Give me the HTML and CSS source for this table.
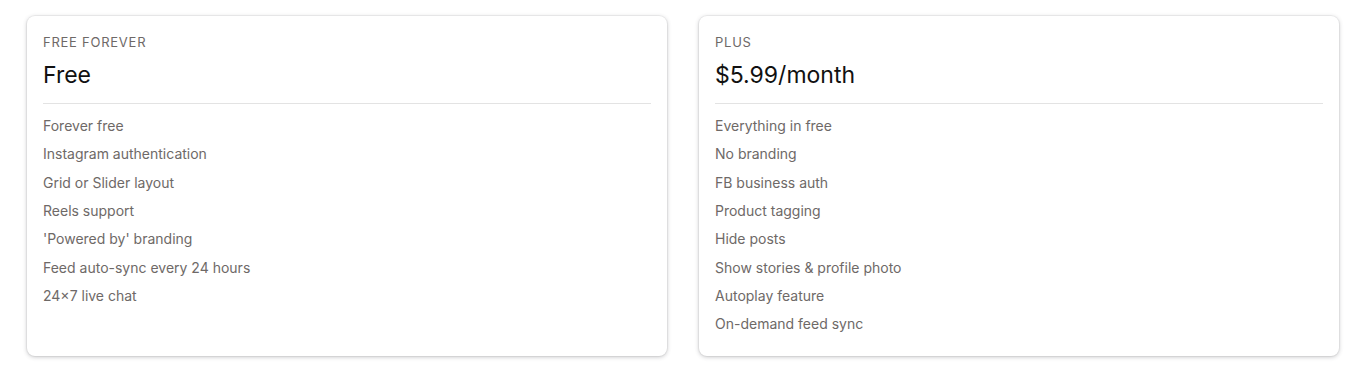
FILE: index.html
```html
<!DOCTYPE html>
<html>
<head>
<meta charset="utf-8">
<link rel="stylesheet" href="styles.css">
</head>
<body>
<div class="plans">
  <div class="card">
    <div class="label">FREE FOREVER</div>
    <div class="price">Free</div>
    <hr class="divider">
    <ul class="features">
      <li>Forever free</li>
      <li>Instagram authentication</li>
      <li>Grid or Slider layout</li>
      <li>Reels support</li>
      <li>'Powered by' branding</li>
      <li>Feed auto-sync every 24 hours</li>
      <li>24×7 live chat</li>
    </ul>
  </div>
  <div class="card">
    <div class="label">PLUS</div>
    <div class="price">$5.99/month</div>
    <hr class="divider">
    <ul class="features">
      <li>Everything in free</li>
      <li>No branding</li>
      <li>FB business auth</li>
      <li>Product tagging</li>
      <li>Hide posts</li>
      <li>Show stories &amp; profile photo</li>
      <li>Autoplay feature</li>
      <li>On-demand feed sync</li>
    </ul>
  </div>
</div>
</body>
</html>
```
FILE: styles.css
```css
html, body {
  margin: 0;
  padding: 0;
  background: #ffffff;
  font-family: Inter, "Noto Sans", sans-serif;
}
.plans {
  display: flex;
  gap: 32px;
  padding: 16px 26px 17px 27px;
}
.card {
  flex: 1;
  background: #fff;
  border-radius: 8px;
  padding: 16px 16px 22px;
  box-shadow: 0 0 0 1px rgba(63, 63, 68, 0.05), 0 1px 4px 0 rgba(63, 63, 68, 0.3);
}
.label {
  font-size: 13px;
  line-height: 20px;
  color: #6e6967;
  letter-spacing: 0.75px;
}
.price {
  font-size: 23px;
  line-height: 28px;
  color: #111;
  margin-top: 9px;
}
.divider {
  border: 0;
  border-top: 1px solid #e3e3e3;
  margin: 14px 0 12px;
}
.features {
  list-style: none;
  margin: 0;
  padding: 0;
  display: flex;
  flex-direction: column;
  gap: 8.33px;
}
.features li {
  font-size: 14px;
  line-height: 20px;
  color: #6e6967;
}
```
